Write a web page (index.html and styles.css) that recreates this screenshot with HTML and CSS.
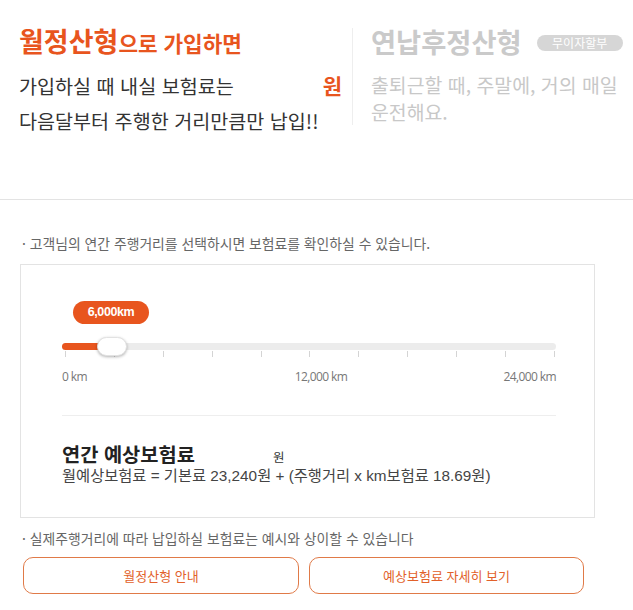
FILE: index.html
```html
<!DOCTYPE html>
<html lang="ko">
<head>
<meta charset="utf-8">
<title>월정산형</title>
<link rel="stylesheet" href="styles.css">
</head>
<body>
<section class="top">
  <div class="plan plan-on">
    <h2 class="plan-title"><span class="plan-name">월정산형</span>으로 가입하면</h2>
    <div class="plan-desc">
      <div class="desc-row"><span>가입하실 때 내실 보험료는</span><span class="won">원</span></div>
      <div class="desc-row">다음달부터 주행한 거리만큼만 납입!!</div>
    </div>
  </div>
  <div class="vdivider"></div>
  <div class="plan plan-off">
    <h2 class="plan-title"><span class="plan-name">연납후정산형</span><span class="pill">무이자할부</span></h2>
    <div class="plan-desc">
      <div class="desc-row">출퇴근할 때, 주말에, 거의 매일</div>
      <div class="desc-row">운전해요.</div>
    </div>
  </div>
</section>
<hr class="hline">
<section class="calc">
  <p class="note">· 고객님의 연간 주행거리를 선택하시면 보험료를 확인하실 수 있습니다.</p>
  <div class="card">
    <div class="slider">
      <div class="bubble">6,000km</div>
      <div class="track">
        <div class="fill" style="width:40px"></div>
        <span class="thumb"></span>
      </div>
      <div class="ticks">
        <i></i><i></i><i></i><i></i><i></i><i></i><i></i><i></i><i></i><i></i><i></i>
      </div>
      <div class="scale">
        <span class="s-min">0 km</span>
        <span class="s-mid">12,000 km</span>
        <span class="s-max">24,000 km</span>
      </div>
    </div>
    <div class="card-line"></div>
    <div class="result">
      <div class="result-title"><strong>연간 예상보험료</strong><span class="result-won">원</span></div>
      <div class="formula">월예상보험료 = 기본료 23,240원 + (주행거리 x km보험료 18.69원)</div>
    </div>
  </div>
  <p class="note note-2">· 실제주행거리에 따라 납입하실 보험료는 예시와 상이할 수 있습니다</p>
  <div class="buttons">
    <button class="btn">월정산형 안내</button>
    <button class="btn">예상보험료 자세히 보기</button>
  </div>
</section>
</body>
</html>
```

FILE: styles.css
```css
* { box-sizing: border-box; }

html, body {
  margin: 0;
  padding: 0;
  background: #fff;
}

body {
  width: 633px;
  font-family: "Noto Sans CJK KR", "Noto Sans", sans-serif;
  color: #333;
  overflow: hidden;
}

.top {
  display: flex;
  align-items: flex-start;
  height: 199px;
  padding-top: 23px;
}

.plan-on {
  width: 352px;
  padding: 0 10px 0 19px;
}

.plan-off {
  padding-left: 18px;
}

.plan-title {
  margin: 0;
  height: 36px;
  line-height: 36px;
  font-weight: 700;
  white-space: nowrap;
  display: flex;
  align-items: baseline;
}

.plan-on .plan-title {
  color: #e8551e;
  font-size: 21.3px;
}

.plan-on .plan-name {
  font-size: 27px;
}

.plan-off .plan-title {
  color: #cacaca;
  font-size: 27.3px;
  align-items: center;
}

.pill {
  display: inline-block;
  margin-left: 15px;
  margin-top: 3px;
  width: 86px;
  height: 16px;
  line-height: 16px;
  border-radius: 8px;
  background: #d6d6d6;
  color: #fff;
  font-size: 12px;
  font-weight: 400;
  text-align: center;
}

.plan-on .plan-desc {
  margin-top: 9px;
  font-size: 19.6px;
  line-height: 35px;
  color: #333;
}

.desc-row {
  white-space: nowrap;
}

.plan-on .desc-row:first-child {
  display: flex;
  justify-content: space-between;
  align-items: baseline;
}

.won {
  color: #e8551e;
  font-weight: 700;
  font-size: 21px;
}

.plan-off .plan-desc {
  margin-top: 12px;
  font-size: 19.4px;
  line-height: 27px;
  color: #c8c8c8;
}

.vdivider {
  width: 1px;
  height: 97px;
  margin-top: 5px;
  background: #eeeeee;
}

.hline {
  margin: 0;
  border: 0;
  border-top: 1px solid #e3e3e3;
  height: 0;
}

.calc {
  padding: 33px 0 0 0;
}

.note {
  margin: 0 0 0 22px;
  height: 20px;
  font-size: 13.85px;
  line-height: 20px;
  color: #666;
  white-space: nowrap;
}

.card {
  margin: 11px 0 0 20px;
  width: 575px;
  border: 1px solid #e3e3e3;
  padding: 36px 38px 31px 41px;
}

.slider {
  width: 494px;
}

.bubble {
  margin-left: 11px;
  width: 76px;
  height: 23px;
  line-height: 23px;
  border-radius: 12px;
  background: #e8551e;
  color: #fff;
  font-family: "Liberation Sans", Arial, sans-serif;
  font-weight: 700;
  font-size: 12.5px;
  letter-spacing: -0.4px;
  text-align: center;
}

.track {
  position: relative;
  margin-top: 19px;
  height: 7px;
  border-radius: 4px;
  background: #ececec;
}

.fill {
  height: 7px;
  border-radius: 4px 0 0 4px;
  background: #e8551e;
}

.thumb {
  position: absolute;
  left: 35px;
  top: -6px;
  width: 30px;
  height: 19px;
  border-radius: 10px;
  background: #fff;
  border: 1px solid #e2e2e2;
  box-shadow: 0 1px 3px rgba(0, 0, 0, 0.3);
}

.ticks {
  display: flex;
  justify-content: space-between;
  margin-top: 1px;
  padding: 0 1px 0 3px;
  height: 6px;
}

.ticks i {
  display: block;
  width: 1px;
  height: 6px;
  background: #d4d4d4;
}

.scale {
  display: flex;
  height: 16px;
  margin-top: 12px;
  font-family: "Open Sans", sans-serif;
  font-size: 12px;
  line-height: 16px;
  letter-spacing: -0.6px;
  color: #777;
  white-space: nowrap;
}

.s-min, .s-max {
  flex: 1;
}

.s-mid {
  margin-left: 24px;
}

.s-max {
  text-align: right;
}

.card-line {
  margin-top: 30px;
  width: 494px;
  height: 1px;
  background: #eeeeee;
}

.result {
  margin-top: 28px;
  font-family: "Liberation Sans", "Noto Sans CJK KR", sans-serif;
}

.result-title {
  height: 22px;
  line-height: 22px;
  font-size: 19.8px;
  white-space: nowrap;
}

.result-title strong {
  font-weight: 700;
  color: #222;
}

.result-won {
  margin-left: 78px;
  font-size: 12.5px;
  line-height: 1;
  color: #333;
}

.formula {
  height: 20px;
  font-size: 15.3px;
  line-height: 20px;
  color: #444;
  white-space: nowrap;
}

.note-2 {
  margin-top: 10px;
}

.buttons {
  display: flex;
  gap: 10px;
  margin: 9px 0 0 23px;
}

.btn {
  width: 276px;
  height: 37px;
  border: 1px solid #e07a48;
  border-radius: 10px;
  background: #fff;
  color: #e2612a;
  font-family: "Noto Sans CJK KR", "Noto Sans", sans-serif;
  font-size: 13px;
  padding: 0;
}

.btn + .btn {
  width: 275px;
}
```
